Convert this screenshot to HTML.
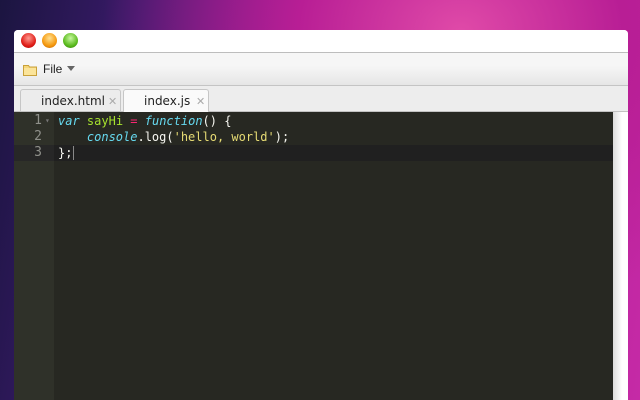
<!DOCTYPE html>
<html><head><style>
body{margin:0;width:640px;height:400px;overflow:hidden;position:relative;
background:radial-gradient(ellipse at 72% 8%,#e04aa8 0%,#b81e95 25%,transparent 55%),linear-gradient(100deg,#1b1540 0%,#3a1a6a 20%,#7a1a8e 50%,#b8209a 80%,#c52aa6 100%);}
.win{position:absolute;left:14px;top:30px;width:614px;height:370px;background:#fff;border-radius:4px 4px 0 0;overflow:hidden}
.title{height:22px;border-bottom:1px solid #bdbdbd;background:#fff;position:relative}
.dot{position:absolute;top:3px;width:15px;height:15px;border-radius:50%}
.menu{height:32px;border-bottom:1px solid #c4c4c4;background:linear-gradient(#f6f6f6 40%,#e6e6e6);position:relative;font:12px "Liberation Sans",sans-serif;color:#222}
.tabs{height:25px;background:#ededed;border-bottom:1px solid #c2c2c2;position:relative;font:12px "DejaVu Sans","Liberation Sans",sans-serif;color:#222}
.tab{position:absolute;top:3px;height:22px;border:1px solid #c6c6c6;border-bottom:none;border-radius:3px 3px 0 0;box-sizing:border-box}
.tab span{position:absolute;top:4px}
.x{color:#aaa;font-size:11px}
.ed{position:absolute;left:0;top:82px;width:599px;bottom:0;background:#272822}
.gut{position:absolute;left:0;top:0;width:40px;bottom:0;background:#2f3129}
.sb{position:absolute;left:599px;top:82px;width:15px;bottom:0;background:linear-gradient(90deg,#dcdcdc,#fff 60%)}
.code{position:absolute;top:1px;left:0;right:0;font:12px "DejaVu Sans Mono",monospace;line-height:16px;color:#f8f8f2}
.row{position:relative;height:16px;white-space:pre}
.ln{position:absolute;left:0;width:28px;text-align:right;color:#8f908a;font-size:13px}
.c{position:absolute;left:44px}
</style></head><body>
<div class="win">
<div class="title">
<div class="dot" style="left:7px;background:radial-gradient(circle at 50% 35%,#ff9a90,#e0201a 60%,#a00)"></div>
<div class="dot" style="left:28px;background:radial-gradient(circle at 50% 35%,#ffe090,#f59a10 60%,#c06000)"></div>
<div class="dot" style="left:49px;background:radial-gradient(circle at 50% 35%,#c8f8a0,#5cbc20 60%,#2c7a00)"></div>
</div>
<div class="menu">
<svg style="position:absolute;left:9px;top:11px" width="14" height="12"><path d="M0.5 1.5h5l1 1.5h7v8.5h-13z" fill="#f6d77a" stroke="#c9a13a"/><rect x="1" y="4" width="12" height="7" fill="#fbe49a"/></svg>
<span style="position:absolute;left:29px;top:9px">File</span>
<span style="position:absolute;left:53px;top:13px;border:4px solid transparent;border-top:5px solid #666;width:0;height:0"></span>
</div>
<div class="tabs">
<div class="tab" style="left:6px;width:101px;background:#ececec"><span style="left:20px">index.html</span><span class="x" style="left:87px;top:5px">✕</span></div>
<div class="tab" style="left:109px;width:86px;background:#fafafa;height:23px"><span style="left:20px">index.js</span><span class="x" style="left:72px;top:5px">✕</span></div>
</div>
<div class="ed">
<div style="position:absolute;left:0;right:0;top:33px;height:16px;background:#202020"></div>
<div class="gut"></div>
<div style="position:absolute;left:0;width:40px;top:33px;height:16px;background:#272727"></div>
<div class="code"><div class="row"><span class="ln">1</span><span style="position:absolute;left:31px;color:#777;font-size:8px">▾</span><span class="c"><i style="color:#66d9ef">var</i> <span style="color:#a6e22e">sayHi</span> <span style="color:#f92672">=</span> <i style="color:#66d9ef">function</i>() {</span></div><div class="row"><span class="ln">2</span><span class="c">    <i style="color:#66d9ef">console</i>.log(<span style="color:#e6db74">'hello, world'</span>);</span></div><div class="row"><span class="ln">3</span><span class="c">};<span style="border-left:1px solid #888;margin-left:1px"></span></span></div></div>
</div>
<div class="sb"></div>
</div>
</body></html>
